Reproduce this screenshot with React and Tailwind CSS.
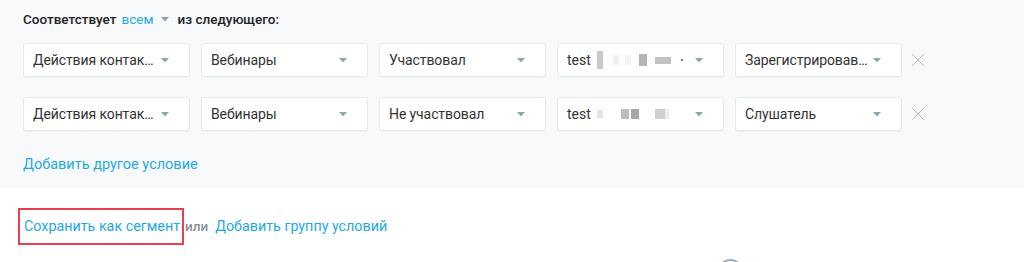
import { X } from "lucide-react";

const font = { fontFamily: "Roboto, 'Noto Sans', sans-serif" };

function Caret({ className = "" }) {
  return (
    <svg width="8" height="5" viewBox="0 0 8 5" className={`shrink-0 ${className}`}>
      <path d="M0 0h8L4 4.5z" fill="#90a4ae" />
    </svg>
  );
}

function Blur({ blocks }) {
  return (
    <div className="flex items-center ml-[6px]">
      {blocks.map((b, i) => (
        <span
          key={i}
          className="block"
          style={{ width: b[0], height: b[1], background: b[2], marginLeft: b[3] || 0 }}
        />
      ))}
    </div>
  );
}

function Select({ label, children }) {
  return (
    <div className="w-[167px] h-[34px] shrink-0 bg-white border border-[#e6e9ed] rounded-[3px] flex items-center pl-[9px] pr-[20px] shadow-[0_1px_1px_rgba(0,0,0,0.03)]">
      {children ? (
        children
      ) : (
        <span className="flex-1 min-w-0 truncate text-[14px] tracking-[-0.1px] text-[#333]">{label}</span>
      )}
      <Caret className="ml-[5px]" />
    </div>
  );
}

function Row({ action, test, last }) {
  return (
    <div className="flex items-center gap-[11px]">
      <Select label="Действия контакта" />
      <Select label="Вебинары" />
      <Select label={action} />
      <Select>
        <div className="flex-1 flex items-center text-[14px] text-[#333] overflow-hidden">
          <span>test</span>
          {test}
        </div>
      </Select>
      <Select label={last} />
      <X size={22} strokeWidth={1} className="text-[#aab3ba] -ml-[6px]" />
    </div>
  );
}

export default function App() {
  return (
    <div className="w-[1024px] h-[262px] bg-white overflow-hidden" style={font}>
      <div className="bg-[#f8f9fb] h-[188px] pl-[23px] pt-[10px]">
        <div className="h-[18px] flex items-center text-[13.5px] font-medium text-[#222]">
          <span>Соответствует</span>
          <span className="ml-[5px] text-[#1fa9e1] font-normal">всем</span>
          <Caret className="ml-[8px]" />
          <span className="ml-[8px]">из следующего:</span>
        </div>
        <div className="mt-[15px] flex flex-col gap-[20px]">
          <Row
            action="Участвовал"
            last="Зарегистрировавшиеся"
            test={
              <Blur
                blocks={[
                  ["6px", "18px", "#c9c9c9"],
                  ["6px", "10px", "#f0f0f0", "10px"],
                  ["6px", "10px", "#f2f2f2", "6px"],
                  ["8px", "12px", "#b5b5b5", "8px"],
                  ["16px", "7px", "#c2c2c2", "8px"],
                  ["2px", "2px", "#777", "10px"],
                ]}
              />
            }
          />
          <Row
            action="Не участвовал"
            last="Слушатель"
            test={
              <Blur
                blocks={[
                  ["6px", "8px", "#e4e4e4"],
                  ["8px", "10px", "#bdbdbd", "18px"],
                  ["8px", "10px", "#a8a8a8", "2px"],
                  ["10px", "10px", "#cfcfcf", "16px"],
                  ["4px", "10px", "#ececec", "0px"],
                ]}
              />
            }
          />
        </div>
        <div className="mt-[23px] text-[14.5px] text-[#1fa9e1]">Добавить другое условие</div>
      </div>
      <div className="pl-[18px] pt-[20px] flex items-center text-[14.3px]">
        <div className="h-[37px] border-2 border-[#e8404f] flex items-center pl-[4px] pr-[2px] text-[#1fa9e1]">
          Сохранить как сегмент
        </div>
        <span className="ml-[1px] text-[#8a8f94] font-medium text-[13.5px]">или</span>
        <span className="ml-[7px] text-[#1fa9e1]">Добавить группу условий</span>
      </div>
      <div className="pl-[717px] mt-[14px] h-[10px] overflow-hidden">
        <div className="w-[27px] h-[27px] rounded-full border-2 border-[#9aaab3]" />
      </div>
    </div>
  );
}
